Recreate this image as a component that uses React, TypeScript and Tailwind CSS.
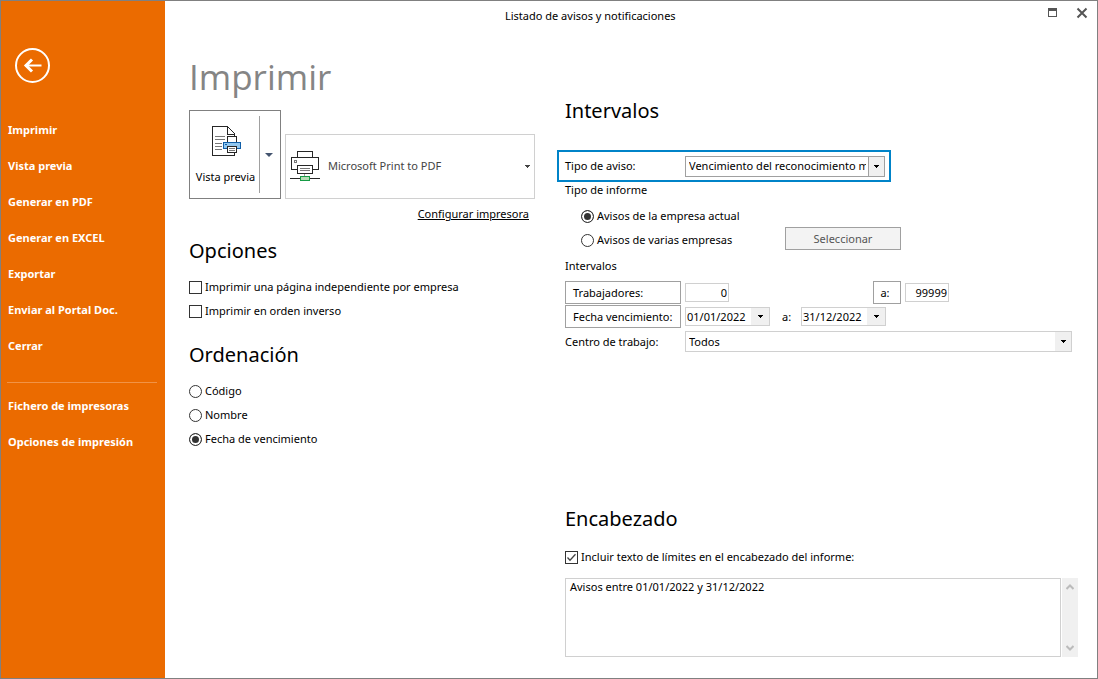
import { useState } from "react";
import type { ReactNode } from "react";

const actions = [
  "Imprimir",
  "Vista previa",
  "Generar en PDF",
  "Generar en EXCEL",
  "Exportar",
  "Enviar al Portal Doc.",
  "Cerrar"
];

const settings = ["Fichero de impresoras", "Opciones de impresión"];

const sortOptions = ["Código", "Nombre", "Fecha de vencimiento"];

const reportOptions = ["Avisos de la empresa actual", "Avisos de varias empresas"];

function Arrow({ className = "text-black" }: { className?: string }) {
  return (
    <svg width="5" height="3" viewBox="0 0 5 3" shapeRendering="crispEdges" className={className}>
      <path d="M0 0h5v1H4v1H3v1H2V2H1V1H0z" fill="currentColor" />
    </svg>
  );
}

function NavItem({ label }: { label: string }) {
  return (
    <li>
      <button type="button" className="flex h-9 w-full items-center px-[7px] text-left font-bold">
        {label}
      </button>
    </li>
  );
}

function Heading({ children }: { children: ReactNode }) {
  return <h2 className="text-[20px] leading-7">{children}</h2>;
}

function Radio(props: { name: string; label: string; checked: boolean; onChange: () => void }) {
  return (
    <label className="flex h-6 items-center gap-[3px]">
      <input
        type="radio"
        name={props.name}
        checked={props.checked}
        onChange={props.onChange}
        className="size-[13px] appearance-none rounded-full border border-[#333333] bg-white checked:bg-[#333333] checked:shadow-[inset_0_0_0_2px_white]"
      />
      {props.label}
    </label>
  );
}

function Check({ label, defaultChecked }: { label: string; defaultChecked?: boolean }) {
  return (
    <label className="flex h-6 items-center gap-[3px]">
      <span className="relative flex">
        <input
          type="checkbox"
          defaultChecked={defaultChecked}
          className="peer size-[13px] appearance-none border border-[#333333] bg-white"
        />
        <svg
          viewBox="0 0 13 13"
          className="pointer-events-none absolute inset-0 hidden size-[13px] peer-checked:block"
        >
          <path d="M2.5 6.5 5 9.3l5.5-6" fill="none" stroke="#444" strokeWidth="1.3" />
        </svg>
      </span>
      {label}
    </label>
  );
}

function DateField({ label, value }: { label: string; value: string }) {
  return (
    <div className="flex h-[19px] w-[85px] border border-[#d0d0d0]">
      <input aria-label={label} defaultValue={value} className="w-full min-w-0 flex-1 px-px outline-none" />
      <button
        type="button"
        aria-label={"Abrir " + label}
        className="flex w-[18px] shrink-0 items-center justify-center bg-[#f0f0f0]"
      >
        <Arrow />
      </button>
    </div>
  );
}

function PreviewIcon() {
  return (
    <svg width="30" height="32" viewBox="0 0 30 32" shapeRendering="crispEdges" fill="none">
      <path d="M1.5 1.5h15l7 7v22h-22z" fill="#fff" stroke="#262626" />
      <path d="M16.5 1.5v8h7" stroke="#262626" />
      <path d="M16.5 1.5l7 7" stroke="#262626" shapeRendering="auto" />
      <path d="M4 11.5h10M4 14.5h10M4 18.5h7M4 21.5h7M4 24.5h7" stroke="#777" />
      <path d="M16.5 11.5h9v6h-9z" fill="#fff" stroke="#262626" />
      <path d="M12.5 17.5h17v6h-17z" fill="#91c7f0" stroke="#0f5ea8" />
      <path d="M14 19.5h2" stroke="#0f5ea8" />
      <path d="M16.5 21.5h9v6h-9z" fill="#fff" stroke="#262626" />
      <path d="M18 23.5h6M18 25.5h6" stroke="#777" />
    </svg>
  );
}

function PrinterIcon() {
  return (
    <svg width="30" height="30" viewBox="0 0 30 30" shapeRendering="crispEdges" fill="none">
      <path d="M7.5 6.5v-6h15v6" stroke="#262626" />
      <path d="M1.5 6.5h27v12h-27z" fill="#fff" stroke="#262626" />
      <path d="M4.5 9.5h2v2h-2z" stroke="#777" />
      <path d="M7.5 14.5h15v8h-15z" fill="#fff" stroke="#262626" />
      <path d="M10 17.5h10M10 19.5h10" stroke="#777" />
      <path d="M14.5 23v2" stroke="#999" />
      <path d="M0 27.5h30" stroke="#262626" />
      <path d="M10.5 25.5h9v4h-9z" fill="#b4dcb4" stroke="#169b45" />
    </svg>
  );
}

export default function App() {
  const [sort, setSort] = useState(sortOptions[2]);
  const [report, setReport] = useState(reportOptions[0]);

  return (
    <div className="flex min-h-screen border border-[#808080] bg-white font-['Noto_Sans',sans-serif] text-[11px] leading-4 text-black">
      {/* Sidebar */}
      <nav className="w-[164px] shrink-0 bg-[#eb6b00] pt-[47px] text-white">
        <button
          type="button"
          aria-label="Volver"
          className="ml-[14px] flex size-[35px] items-center justify-center rounded-full border-2 border-white"
        >
          <svg width="19" height="15" viewBox="0 0 19 15" fill="none">
            <path d="M2 7.5h16.500" stroke="#fff" strokeWidth="2" />
            <path d="M9 1.500 3 7.500l6 6" stroke="#fff" strokeWidth="3" />
          </svg>
        </button>
        <ul className="mt-[29px]">
          {actions.map((item) => (
            <NavItem key={item} label={item} />
          ))}
        </ul>
        <hr className="mr-2 ml-[6px] mt-[18px] mb-[5px] border-[#f19346]" />
        <ul>
          {settings.map((item) => (
            <NavItem key={item} label={item} />
          ))}
        </ul>
      </nav>

      <div className="flex min-w-0 flex-1 flex-col">
        {/* Title bar */}
        <header className="flex h-[30px] items-center pr-[9px]">
          <p className="flex-1 pl-[340px]">Listado de avisos y notificaciones</p>
          <div className="flex gap-[18px] pb-[7px] text-[#555555]">
            <button type="button" aria-label="Maximizar">
              <svg width="11" height="11" viewBox="0 0 11 11" shapeRendering="crispEdges">
                <path d="M1 1h9v9H1zM2 4v5h7V4z" fill="currentColor" fillRule="evenodd" />
              </svg>
            </button>
            <button type="button" aria-label="Cerrar">
              <svg width="12" height="12" viewBox="0 0 12 12">
                <path d="M1.500 1.500l9 9M10.500 1.500l-9 9" stroke="currentColor" strokeWidth="2" />
              </svg>
            </button>
          </div>
        </header>

        <main className="flex flex-1 gap-[30px] pr-[19px] pb-[21px] pl-6">
          {/* Printer and options */}
          <section className="w-[346px] shrink-0 pt-[22px]">
            <h1 className="font-['Open_Sans',sans-serif] text-[35px] leading-[48px] text-[#858585]">
              Imprimir
            </h1>
            <div className="mt-[9px] flex items-end gap-1">
              <div className="flex h-[89px] w-[92px] shrink-0 border border-[#808080] py-[5px]">
                <button
                  type="button"
                  className="flex flex-1 flex-col items-center justify-between pt-[9px] pb-2 pl-[2px] whitespace-nowrap"
                >
                  <PreviewIcon />
                  Vista previa
                </button>
                <button
                  type="button"
                  aria-label="Opciones de vista previa"
                  className="flex w-[21px] items-center justify-center border-l border-[#a0a0a0] pr-[3px]"
                >
                  <svg width="8" height="4" viewBox="0 0 8 4">
                    <path d="M0 0h8L4 4z" fill="#44546f" />
                  </svg>
                </button>
              </div>
              <div className="relative h-[65px] flex-1">
                <select
                  aria-label="Impresora"
                  className="size-full appearance-none border border-[#d0d0d0] bg-white pb-[2px] pl-[42px] text-[#444444]"
                >
                  <option>Microsoft Print to PDF</option>
                </select>
                <div className="pointer-events-none absolute inset-y-0 left-[5px] flex items-center pb-[2px]">
                  <PrinterIcon />
                </div>
                <div className="pointer-events-none absolute inset-y-0 right-[5px] flex items-center">
                  <Arrow className="text-[#444444]" />
                </div>
              </div>
            </div>
            <div className="mt-[7px] flex justify-end pr-[6px]">
              <a href="#impresora" className="underline">
                Configurar impresora
              </a>
            </div>

            <div className="mt-[15px]">
              <Heading>Opciones</Heading>
              <div className="mt-[10px]">
                <Check label="Imprimir una página independiente por empresa" />
                <Check label="Imprimir en orden inverso" />
              </div>
            </div>

            <div className="mt-[18px]">
              <Heading>Ordenación</Heading>
              <div className="mt-[10px]">
                {sortOptions.map((item) => (
                  <Radio
                    key={item}
                    name="orden"
                    label={item}
                    checked={sort === item}
                    onChange={() => setSort(item)}
                  />
                ))}
              </div>
            </div>
          </section>

          {/* Report limits */}
          <section className="flex min-w-0 flex-1 flex-col pt-[66px]">
            <Heading>Intervalos</Heading>
            <div className="mt-[25px] -ml-2 flex h-8 w-[334px] items-center border-2 border-[#0083c8] pr-1 pl-[6px]">
              <label htmlFor="aviso" className="w-[120px] shrink-0">
                Tipo de aviso:
              </label>
              <div className="relative h-[21px] min-w-0 flex-1">
                <select
                  id="aviso"
                  className="size-full appearance-none border border-[#a0a0a0] bg-white pr-[18px] pl-[3px]"
                >
                  <option>Vencimiento del reconocimiento médico</option>
                </select>
                <div className="pointer-events-none absolute inset-y-px right-px flex w-4 items-center justify-center border-l border-[#a0a0a0] bg-[#f0f0f0]">
                  <Arrow />
                </div>
              </div>
            </div>

            <p>Tipo de informe</p>
            <div className="mt-[6px] flex items-end pl-4">
              <div className="w-[204px]">
                {reportOptions.map((item) => (
                  <Radio
                    key={item}
                    name="informe"
                    label={item}
                    checked={report === item}
                    onChange={() => setReport(item)}
                  />
                ))}
              </div>
              <button
                type="button"
                className="mb-[2px] h-[23px] w-[116px] border border-[#a0a0a0] bg-[#f3f3f3] text-[#555555]"
              >
                Seleccionar
              </button>
            </div>

            <p className="mt-[6px]">Intervalos</p>
            <div className="mt-[7px] flex items-center">
              <button type="button" className="h-[23px] w-[116px] border border-[#a0a0a0] pl-[7px] text-left">
                Trabajadores:
              </button>
              <input
                aria-label="Trabajador inicial"
                defaultValue="0"
                className="ml-1 h-[19px] w-11 border border-[#d0d0d0] pr-px text-right"
              />
              <button type="button" className="ml-36 h-[23px] w-7 border border-[#a0a0a0] pr-1">
                a:
              </button>
              <input
                aria-label="Trabajador final"
                defaultValue="99999"
                className="ml-1 h-[19px] w-11 border border-[#d0d0d0] pr-px text-right"
              />
            </div>
            <div className="mt-px flex items-center">
              <button type="button" className="mr-1 h-[23px] w-[116px] border border-[#a0a0a0] pl-[7px] text-left">
                Fecha vencimiento:
              </button>
              <DateField label="Fecha inicial" value="01/01/2022" />
              <span className="w-[31px] pl-3">a:</span>
              <DateField label="Fecha final" value="31/12/2022" />
            </div>
            <div className="mt-[3px] flex items-center pr-[6px]">
              <label htmlFor="centro" className="w-[120px] shrink-0">
                Centro de trabajo:
              </label>
              <div className="relative h-[21px] flex-1">
                <select
                  id="centro"
                  className="size-full appearance-none border border-[#d0d0d0] bg-white pl-[3px]"
                >
                  <option>Todos</option>
                </select>
                <div className="pointer-events-none absolute inset-y-px right-px flex w-4 items-center justify-center bg-[#f0f0f0]">
                  <Arrow />
                </div>
              </div>
            </div>

            <div className="mt-auto pt-6">
              <Heading>Encabezado</Heading>
              <div className="mt-3">
                <Check label="Incluir texto de límites en el encabezado del informe:" defaultChecked />
              </div>
              <div className="mt-[9px] flex gap-px">
                <textarea
                  aria-label="Texto del encabezado"
                  defaultValue="Avisos entre 01/01/2022 y 31/12/2022"
                  className="h-[79px] flex-1 resize-none overflow-hidden border border-[#d0d0d0] px-1 outline-none"
                />
                <div className="flex w-4 flex-col items-center justify-between bg-[#f0f0f0] py-[6px] text-[#bbbbbb]">
                  <button type="button" aria-label="Subir">
                    <svg width="8" height="6" viewBox="0 0 8 6" fill="none" className="block">
                      <path d="M.500 5 4 1.500 7.500 5" stroke="currentColor" strokeWidth="2" />
                    </svg>
                  </button>
                  <button type="button" aria-label="Bajar">
                    <svg width="8" height="6" viewBox="0 0 8 6" fill="none" className="block">
                      <path d="M.500 1 4 4.500 7.500 1" stroke="currentColor" strokeWidth="2" />
                    </svg>
                  </button>
                </div>
              </div>
            </div>
          </section>
        </main>
      </div>
    </div>
  );
}
